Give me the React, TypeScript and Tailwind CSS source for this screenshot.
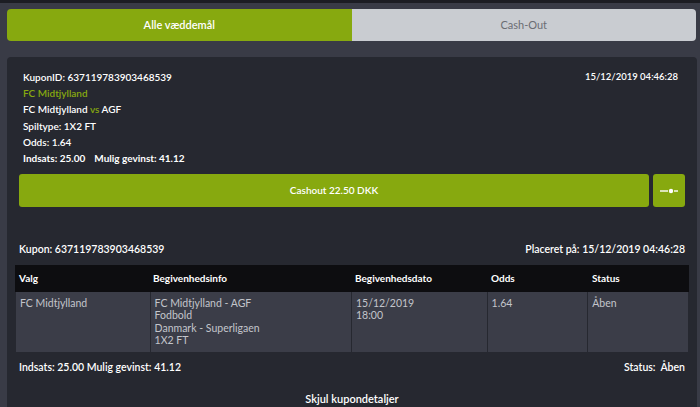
const font = { fontFamily: "Lato, 'Open Sans', sans-serif" };

const columns = ["Valg", "Begivenhedsinfo", "Begivenhedsdato", "Odds", "Status"];
const widths = ["w-[134px]", "w-[202px]", "w-[136px]", "w-[101px]", "w-[101px]"];

const row = [
  ["FC Midtjylland"],
  ["FC Midtjylland - AGF", "Fodbold", "Danmark - Superligaen", "1X2 FT"],
  ["15/12/2019", "18:00"],
  ["1.64"],
  ["Åben"],
];

export default function App() {
  return (
    <div
      className="h-[407px] w-[700px] overflow-hidden border-t-[3px] border-[#1c1d23] bg-[#393b46] text-[11px] text-white"
      style={font}
    >
      {/* tabs */}
      <div className="ml-[7px] mr-[4px] mt-[6px] flex h-[32px]">
        <button className="flex-1 rounded-l-[4px] bg-[#87a90f] font-semibold text-white">
          Alle væddemål
        </button>
        <button className="flex-1 rounded-r-[4px] bg-[#c9ccd1] text-[#6b6d73]">
          Cash-Out
        </button>
      </div>

      {/* card */}
      <div className="ml-[7px] mr-[3px] mt-[16px] rounded-t-[4px] bg-[#262830] pt-[12px]">
        <div className="px-[12px]">
          <div className="flex justify-between px-[4px] text-[10px] font-semibold leading-[16.2px]">
            <div>
              <div>KuponID: 637119783903468539</div>
              <div className="text-[#87a90f]">FC Midtjylland</div>
              <div>
                FC Midtjylland <span className="text-[#87a90f]">vs</span> AGF
              </div>
              <div>Spiltype: 1X2 FT</div>
              <div>Odds: 1.64</div>
              <div className="flex gap-[9px] font-bold">
                <span>Indsats: 25.00</span>
                <span>Mulig gevinst: 41.12</span>
              </div>
            </div>
            <div className="pr-[3px] text-[9.5px]">15/12/2019 04:46:28</div>
          </div>

          <div className="mt-[8px] flex gap-[4px]">
            <button className="h-[33px] flex-1 rounded-[3px] bg-[#87a90f] text-[10px] font-semibold text-white">
              Cashout 22.50 DKK
            </button>
            <button className="flex h-[33px] w-[32px] items-center justify-center rounded-[3px] bg-[#87a90f]">
              <svg width="18" height="6" viewBox="0 0 18 6">
                <rect x="0" y="2.3" width="8" height="1.4" fill="white" />
                <circle cx="11" cy="3" r="2.2" fill="white" />
                <rect x="14" y="2.3" width="4" height="1.4" fill="white" />
              </svg>
            </button>
          </div>
        </div>

        <div className="mt-[35px] px-[8px]">
          <div className="flex justify-between px-[4px] text-[10.5px] font-semibold">
            <span>Kupon: 637119783903468539</span>
            <span>Placeret på: 15/12/2019 04:46:28</span>
          </div>

          <div className="mt-[7px] w-[674px]">
            <div className="flex h-[27px] items-center bg-[#0d0d10] text-[10px] font-bold">
              {columns.map((c, i) => (
                <div key={c} className={`${widths[i]} px-[4px]`}>
                  {c}
                </div>
              ))}
            </div>
            <div className="flex h-[61px] border-x border-b border-[#262830] bg-[#3b3d48] text-[10.5px] text-[#c3c5cb]">
              {row.map((lines, i) => (
                <div
                  key={i}
                  className={`${widths[i]} border-l border-[#262830] px-[4px] pt-[5px] leading-[12.5px] first:border-l-0`}
                >
                  {lines.map((l) => (
                    <div key={l}>{l}</div>
                  ))}
                </div>
              ))}
            </div>
          </div>

          <div className="mt-[7px] flex justify-between px-[4px] text-[10.5px] font-semibold">
            <span>Indsats: 25.00 Mulig gevinst: 41.12</span>
            <span>Status:&nbsp; Åben</span>
          </div>

          <div className="mt-[15px] text-center font-semibold">Skjul kupondetaljer</div>
        </div>
      </div>
    </div>
  );
}
